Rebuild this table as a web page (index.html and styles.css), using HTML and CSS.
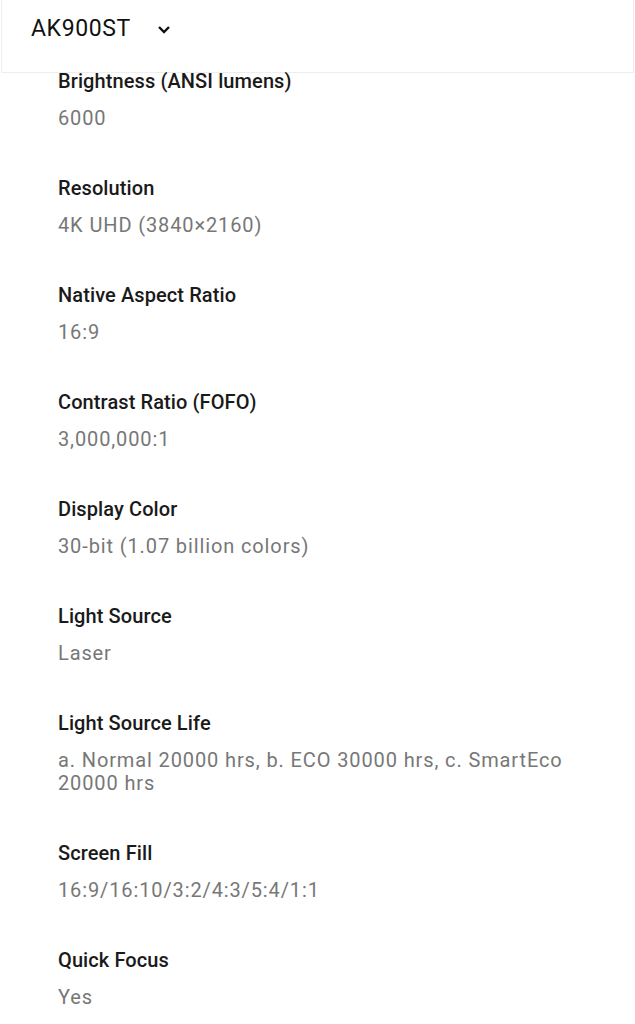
FILE: index.html
```html
<!DOCTYPE html>
<html lang="en">
<head>
  <meta charset="UTF-8" />
  <meta name="viewport" content="width=device-width, initial-scale=1.0"/>
  <title>AK900ST Specifications</title>
  <link rel="stylesheet" href="styles.css">
</head>
<body>
  <div id="modelBar">
    <span class="model-name">AK900ST</span>
    <svg class="chevron" width="14" height="10" viewBox="0 0 14 10">
      <path d="M2 2 L7 7 L12 2" fill="none" stroke="#111" stroke-width="2.4"/>
    </svg>
  </div>

  <div id="specs">
    <div class="spec">
      <div class="spec-name">Brightness (ANSI lumens)</div>
      <div class="spec-value">6000</div>
    </div>
    <div class="spec">
      <div class="spec-name">Resolution</div>
      <div class="spec-value">4K UHD (3840×2160)</div>
    </div>
    <div class="spec">
      <div class="spec-name">Native Aspect Ratio</div>
      <div class="spec-value">16:9</div>
    </div>
    <div class="spec">
      <div class="spec-name">Contrast Ratio (FOFO)</div>
      <div class="spec-value">3,000,000:1</div>
    </div>
    <div class="spec">
      <div class="spec-name">Display Color</div>
      <div class="spec-value">30-bit (1.07 billion colors)</div>
    </div>
    <div class="spec">
      <div class="spec-name">Light Source</div>
      <div class="spec-value">Laser</div>
    </div>
    <div class="spec">
      <div class="spec-name">Light Source Life</div>
      <div class="spec-value">a. Normal 20000 hrs, b. ECO 30000 hrs, c. SmartEco 20000 hrs</div>
    </div>
    <div class="spec">
      <div class="spec-name">Screen Fill</div>
      <div class="spec-value">16:9/16:10/3:2/4:3/5:4/1:1</div>
    </div>
    <div class="spec">
      <div class="spec-name">Quick Focus</div>
      <div class="spec-value">Yes</div>
    </div>
  </div>
</body>
</html>
```

FILE: styles.css
```css
body {
  font-family: Roboto, "Liberation Sans", sans-serif;
  background: #fff;
  margin: 0;
  padding: 0;
}
#modelBar {
  height: 73px;
  box-sizing: border-box;
  margin: 0 1px;
  padding: 15px 29px 0;
  border: 1px solid #eee;
  border-top: none;
  display: flex;
  align-items: flex-start;
  gap: 26px;
  background: #fff;
}
.model-name {
  font-size: 23px;
  line-height: 28px;
  letter-spacing: 0.6px;
  color: #111;
}
.chevron {
  margin-top: 10px;
}
#specs {
  padding: 0 58px;
}
.spec {
  padding-bottom: 50px;
}
.spec-name {
  font-size: 20px;
  font-weight: 500;
  line-height: 16px;
  letter-spacing: 0.1px;
  color: #1a1a1a;
  margin-bottom: 18px;
}
.spec-value {
  font-size: 20px;
  line-height: 23px;
  letter-spacing: 0.88px;
  color: #777;
}
```
